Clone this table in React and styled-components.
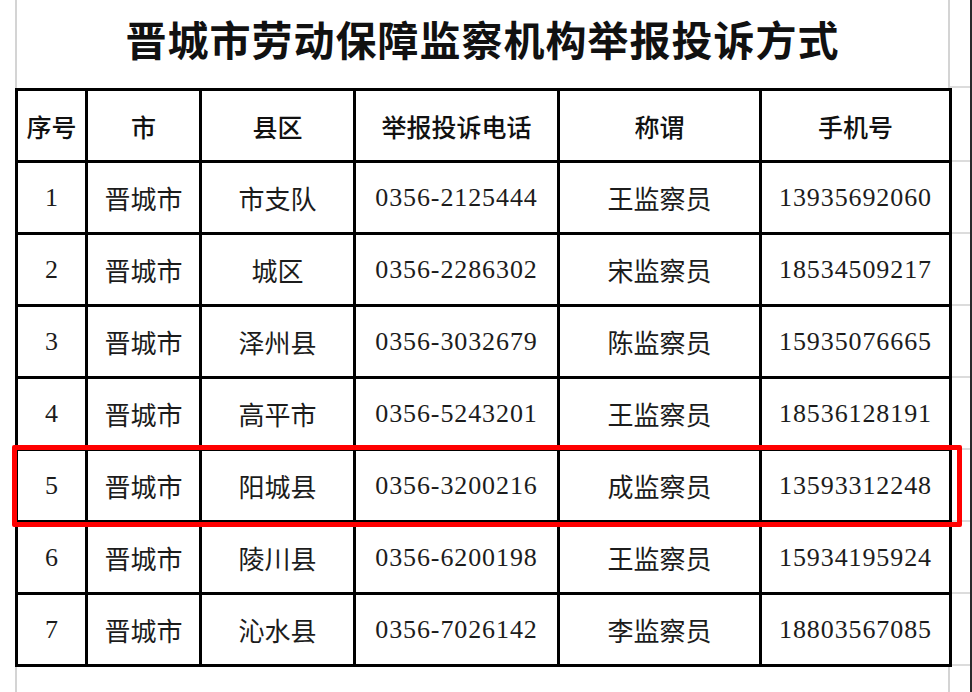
import styled, { createGlobalStyle } from "styled-components";

const GlobalStyle = createGlobalStyle`
  html, body {
    margin: 0;
    padding: 0;
    background: #ffffff;
    overflow: hidden;
  }
`;

const Sheet = styled.div`
  width: 972px;
  height: 692px;
  box-sizing: border-box;
  border-right: 2px solid #2a2a2a;
  overflow: hidden;
  background: #fff;
  display: flex;
  flex-direction: column;
`;

const TitleRow = styled.div`
  display: flex;
  flex: none;
  height: 88px;
`;

const Gutter = styled.div`
  width: ${(p) => p.$w}px;
  flex: none;
  box-sizing: border-box;
  border-bottom: ${(p) => (p.$line ? "2px solid #dcdcdc" : "none")};
`;

const Title = styled.h1`
  margin: 0;
  width: 935px;
  flex: none;
  box-sizing: border-box;
  border-left: 2px solid #d4d4d4;
  border-right: 2px solid #d4d4d4;
  display: flex;
  align-items: center;
  justify-content: center;
  padding-bottom: 12px;
  font-family: "Noto Sans CJK SC", sans-serif;
  font-weight: 700;
  font-size: 41px;
  letter-spacing: 1px;
  color: #111;
`;

const TableRow = styled.div`
  display: flex;
  flex: none;
`;

const Grid = styled.div`
  position: relative;
  display: grid;
  grid-template-columns: 67px 111px 151px 201px 199px 187px;
  grid-auto-rows: 69px;
  gap: 3px;
  padding: 3px;
  background: #000;
`;

const Cell = styled.div`
  background: #fff;
  display: flex;
  align-items: center;
  justify-content: center;
  color: ${(p) => (p.$head ? "#111" : "#1c1c1c")};
  font-family: ${(p) =>
    p.$head
      ? '"Noto Sans CJK SC", sans-serif'
      : '"Liberation Serif", "Noto Sans CJK SC", serif'};
  font-size: ${(p) => (p.$head ? "25px" : "26px")};
  font-weight: ${(p) => (p.$head ? 500 : 400)};
  letter-spacing: ${(p) => (p.$num ? "0.9px" : "0")};
`;

const Margin = styled.div`
  width: 18px;
  display: flex;
  flex-direction: column;
`;

const MarginCell = styled.div`
  height: 72px;
  flex: none;
  box-sizing: border-box;
  border-bottom: 2px solid #dcdcdc;
  &:first-child {
    height: 74px;
  }
`;

const Highlight = styled.div`
  position: absolute;
  left: -3px;
  right: -10px;
  top: ${(p) => p.$row * 72 - 3}px;
  height: 82px;
  box-sizing: border-box;
  border: 5px solid #ff0000;
  border-radius: 2px;
  pointer-events: none;
`;

const Foot = styled.div`
  display: flex;
  flex: 1;
`;

const FootBody = styled.div`
  width: 935px;
  box-sizing: border-box;
  border-left: 2px solid #d4d4d4;
  border-right: 2px solid #d4d4d4;
`;

const header = ["序号", "市", "县区", "举报投诉电话", "称谓", "手机号"];

const rows = [
  ["1", "晋城市", "市支队", "0356-2125444", "王监察员", "13935692060"],
  ["2", "晋城市", "城区", "0356-2286302", "宋监察员", "18534509217"],
  ["3", "晋城市", "泽州县", "0356-3032679", "陈监察员", "15935076665"],
  ["4", "晋城市", "高平市", "0356-5243201", "王监察员", "18536128191"],
  ["5", "晋城市", "阳城县", "0356-3200216", "成监察员", "13593312248"],
  ["6", "晋城市", "陵川县", "0356-6200198", "王监察员", "15934195924"],
  ["7", "晋城市", "沁水县", "0356-7026142", "李监察员", "18803567085"],
];

export default function App() {
  return (
    <Sheet>
      <GlobalStyle />
      <TitleRow>
        <Gutter $w={15} />
        <Title>晋城市劳动保障监察机构举报投诉方式</Title>
        <Gutter $w={20} $line />
      </TitleRow>
      <TableRow>
        <Gutter $w={15} />
        <Grid>
          {header.map((h) => (
            <Cell key={h} $head>
              {h}
            </Cell>
          ))}
          {rows.map((r) =>
            r.map((v, i) => (
              <Cell key={r[0] + "-" + i} $num={i === 3 || i === 5}>
                {v}
              </Cell>
            ))
          )}
          <Highlight $row={5} />
        </Grid>
        <Margin>
          {Array.from({ length: 8 }).map((_, i) => (
            <MarginCell key={i} />
          ))}
        </Margin>
      </TableRow>
      <Foot>
        <Gutter $w={15} />
        <FootBody />
      </Foot>
    </Sheet>
  );
}
